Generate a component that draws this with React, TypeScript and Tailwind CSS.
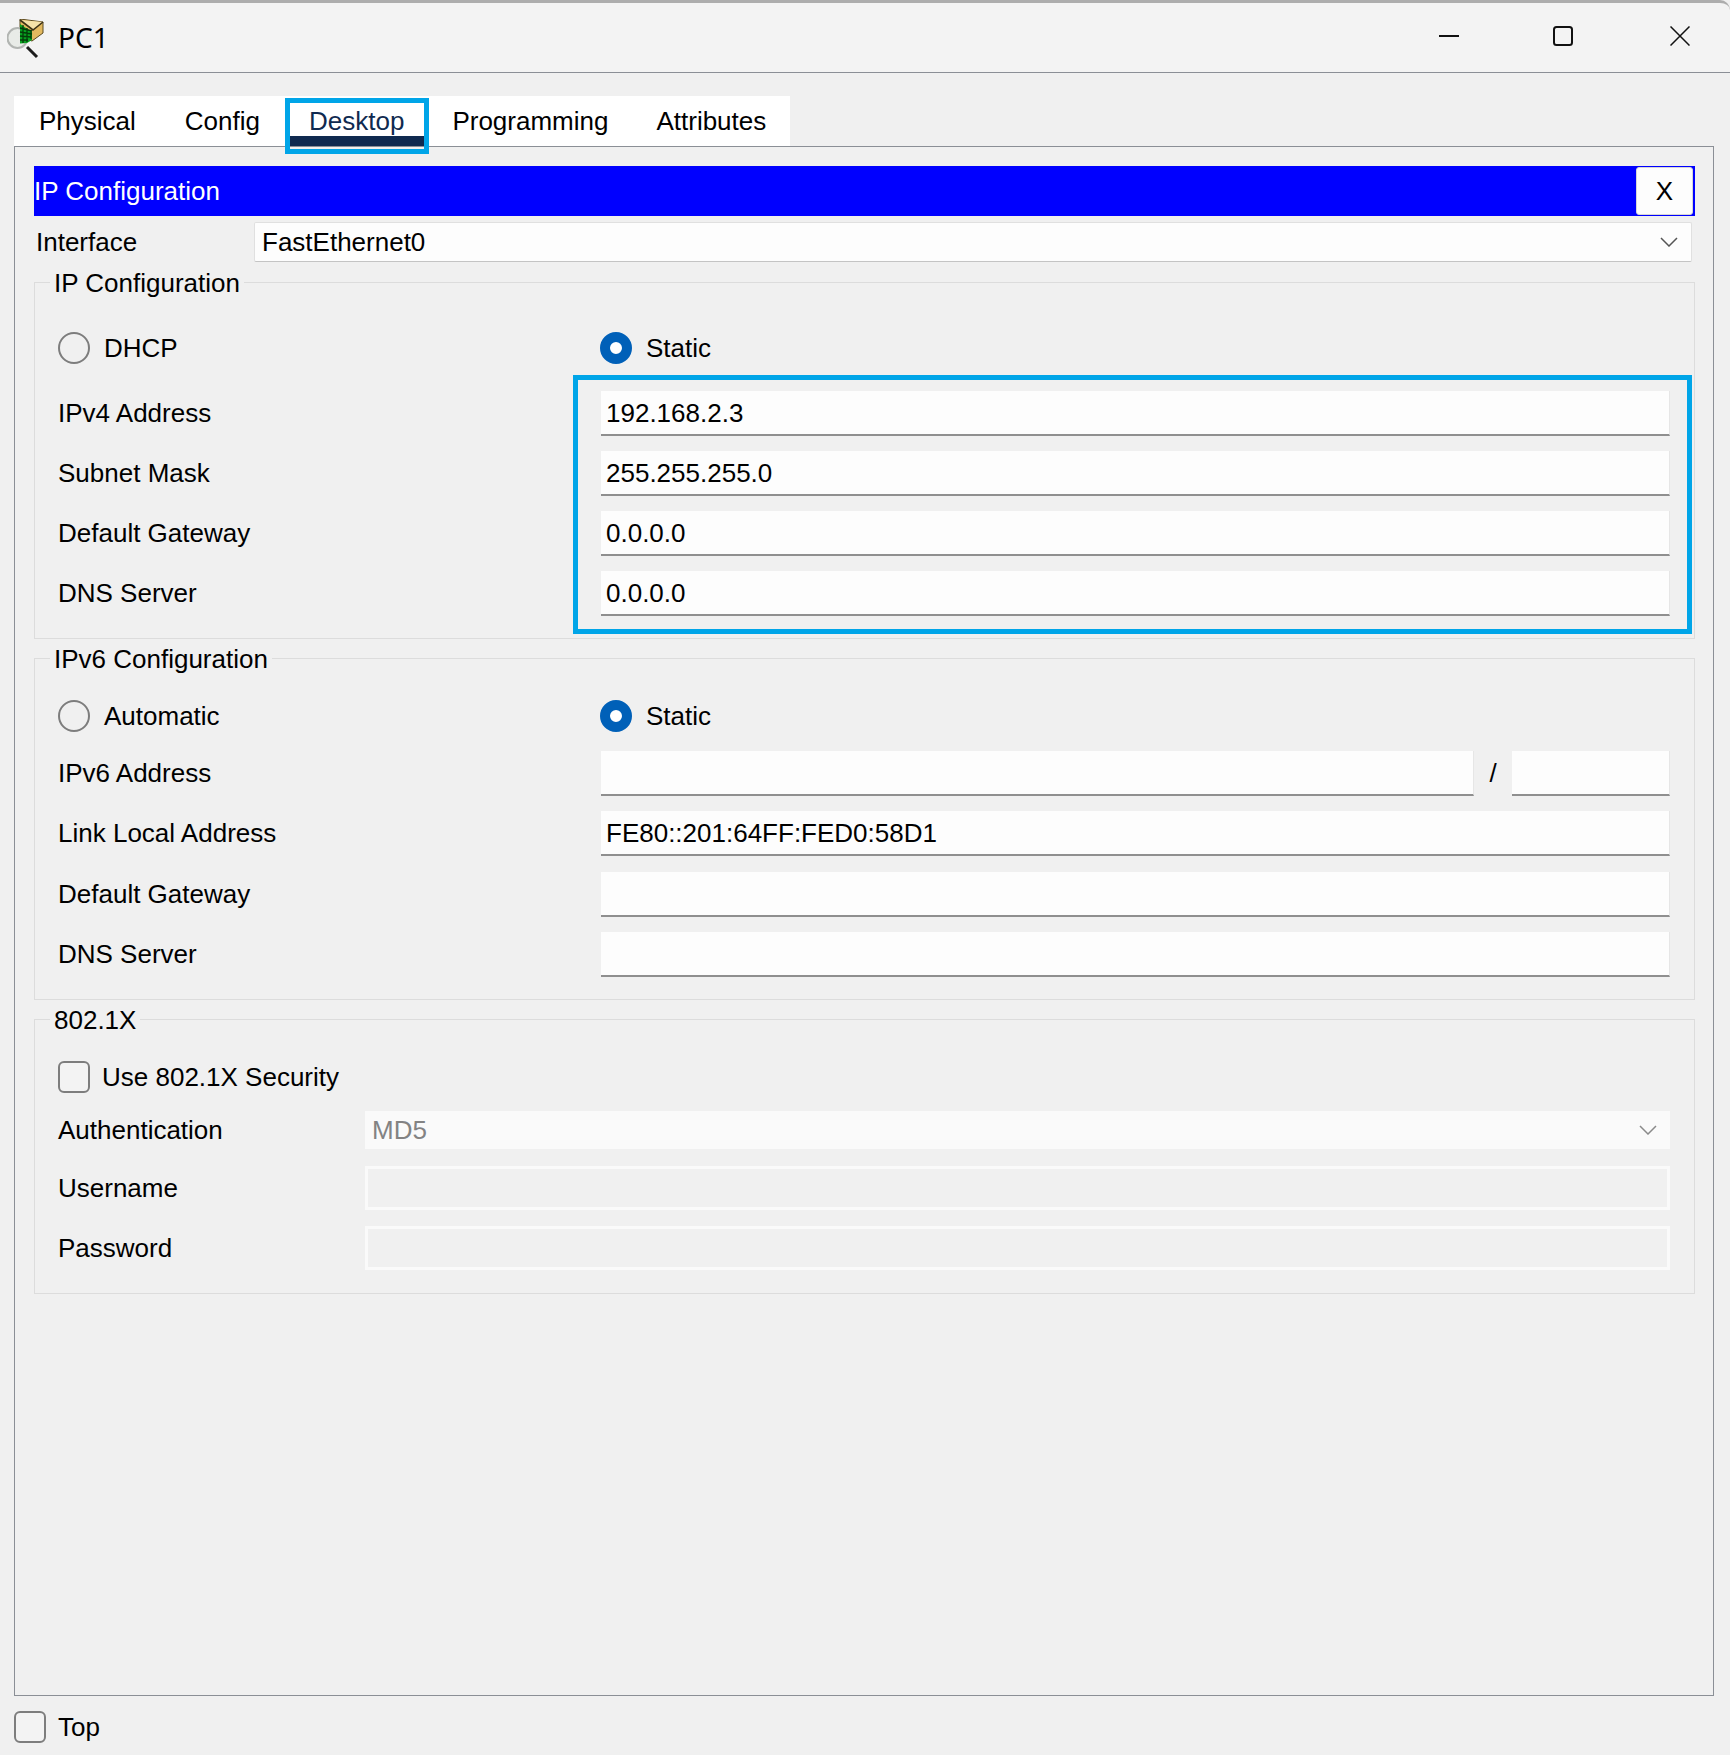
import React from "react";

const Radio = ({ checked }: { checked?: boolean }) =>
  checked ? (
    <span className="block w-[32px] h-[32px] shrink-0 rounded-full border-[10px] border-[#0060b8] bg-white" />
  ) : (
    <span className="block w-[32px] h-[32px] shrink-0 rounded-full border-2 border-[#7d7d7d]" />
  );

const Check = () => (
  <span className="block w-[32px] h-[32px] shrink-0 rounded-[6px] border-2 border-[#7d7d7d] bg-[#f3f3f3]" />
);

const Field = ({ value, className = "" }: { value?: string; className?: string }) => (
  <div className={`h-[45px] flex items-center pl-[5px] pt-[2px] bg-[#fdfdfd] border-b-2 border-r border-r-[#e6e6e6] border-b-[#8f8f8f] ${className}`}>
    {value}
  </div>
);

const Row = ({ label, value, mt = "mt-[15px]" }: { label: string; value?: string; mt?: string }) => (
  <div className={`flex items-center h-[45px] ${mt}`}>
    <div className="w-[543px] shrink-0">{label}</div>
    <Field value={value} className="flex-1" />
  </div>
);

const Section = ({ legend, className, children }: { legend: string; className: string; children: React.ReactNode }) => (
  <div className={`relative border border-[#dcdcdc] pl-[23px] pr-[24px] ${className}`}>
    <div className="absolute left-[15px] top-[-15px] h-[30px] px-[4px] flex items-center bg-[#f0f0f0]">{legend}</div>
    {children}
  </div>
);

const Chevron = ({ color }: { color: string }) => (
  <svg width="18" height="10" viewBox="0 0 18 10" fill="none" stroke={color} strokeWidth="1.5">
    <path d="M1 1l8 8 8-8" />
  </svg>
);

const AppIcon = () => (
  <svg width="40" height="40" viewBox="0 0 40 40" className="shrink-0 ml-[7px] mt-[2px]">
    <path d="M13 0l23 3v11l-11 8-12-4z" fill="#e3b95f" stroke="#5b4a20" strokeWidth="1" />
    <path d="M13 1l13 10 10-8" fill="#f5e2a8" stroke="#3d3215" strokeWidth="1.6" />
    <circle cx="10.5" cy="19" r="10" fill="#e8ebe7" stroke="#b2b5b2" strokeWidth="2" />
    <path d="M13 5l12 8v8l-5 3-7 .5z" fill="#07a21f" />
    <path d="M13 9l12 3M13 13l12 2M13 17l11 1M13 21l8 0M16 6v18M20 9v14M24 12v8" stroke="#043c0a" strokeWidth="1.3" />
    <path d="M20 28l10 10" stroke="#1c1c1c" strokeWidth="3" />
  </svg>
);

export default function App() {
  return (
    <div className="w-[1730px] h-[1755px] flex flex-col bg-[#f0f0f0] text-black text-[26px] font-['Liberation_Sans',Arial,sans-serif] overflow-hidden">
      {/* title bar */}
      <div className="h-[73px] shrink-0 flex items-center bg-[#f3f3f3] border-t-[3px] border-t-[#adadad] border-b border-b-[#8b8f96] rounded-tr-[10px]">
        <AppIcon />
        <span className="ml-[11px] mb-[2px] text-[28px] font-['Noto_Sans',sans-serif] leading-none">PC1</span>
        <div className="ml-auto flex items-center gap-[95px] pr-[40px] mb-[3px]">
          <svg width="20" height="20" viewBox="0 0 20 20"><path d="M0 10h20" stroke="#111" strokeWidth="2" /></svg>
          <svg width="20" height="20" viewBox="0 0 20 20" className="-ml-[1px]"><rect x="1" y="1" width="18" height="18" rx="2.5" fill="none" stroke="#111" strokeWidth="2" /></svg>
          <svg width="20" height="20" viewBox="0 0 20 20" className="ml-[2px]"><path d="M0.5 0.5l19 19M19.5 0.5l-19 19" stroke="#111" strokeWidth="1.5" /></svg>
        </div>
      </div>

      {/* tabs */}
      <div className="mt-[23px] ml-[14px] w-fit h-[50px] shrink-0 flex items-center gap-[49px] pl-[25px] pr-[24px] bg-white">
        <span>Physical</span>
        <span>Config</span>
        <span className="relative h-full flex items-center text-[#0f2a50]">
          Desktop
          <span className="absolute z-10 left-[-24px] top-[2px] w-[144px] h-[56px] border-[5px] border-[#00a5e8]" />
          <span className="absolute left-[-19px] top-[40px] w-[134px] h-[10px] bg-[#0f2a50]" />
        </span>
        <span className="-ml-[1px]">Programming</span>
        <span className="-ml-[1px]">Attributes</span>
      </div>

      {/* panel */}
      <div className="ml-[14px] w-[1700px] flex-1 border border-[#8b8f96] pt-[19px] pl-[19px] pr-[18px]">
        <div className="h-[50px] flex items-center justify-between bg-[#0000ff] text-white pr-[2px]">
          <span>IP Configuration</span>
          <button className="w-[57px] h-[48px] bg-[#fdfdfd] text-black rounded-[3px] border border-[#d6d6d6]">X</button>
        </div>

        <div className="mt-[6px] h-[40px] flex items-center pl-[2px] pr-[3px]">
          <span className="w-[218px] shrink-0">Interface</span>
          <div className="flex-1 h-full flex items-center justify-between pl-[7px] pr-[13px] bg-[#fdfdfd] border border-[#e0e0e0] border-b-[#c4c4c4] rounded-[2px]">
            <span>FastEthernet0</span>
            <Chevron color="#555" />
          </div>
        </div>

        <Section legend="IP Configuration" className="mt-[20px] pt-[49px] pb-[22px]">
          <div className="flex items-center h-[32px]">
            <div className="w-[542px] flex items-center gap-[14px]"><Radio /><span>DHCP</span></div>
            <div className="flex items-center gap-[14px]"><Radio checked /><span>Static</span></div>
          </div>
          <Row label="IPv4 Address" value="192.168.2.3" mt="mt-[27px]" />
          <Row label="Subnet Mask" value="255.255.255.0" />
          <Row label="Default Gateway" value="0.0.0.0" />
          <Row label="DNS Server" value="0.0.0.0" />
          <div className="absolute left-[538px] top-[92px] w-[1119px] h-[259px] border-[5px] border-[#00a5e8]" />
        </Section>

        <Section legend="IPv6 Configuration" className="mt-[19px] pt-[41px] pb-[22px]">
          <div className="flex items-center h-[32px]">
            <div className="w-[542px] flex items-center gap-[14px]"><Radio /><span>Automatic</span></div>
            <div className="flex items-center gap-[14px]"><Radio checked /><span>Static</span></div>
          </div>
          <div className="flex items-center h-[45px] mt-[19px]">
            <div className="w-[543px] shrink-0">IPv6 Address</div>
            <Field className="w-[873px]" />
            <div className="w-[38px] text-center">/</div>
            <Field className="flex-1" />
          </div>
          <Row label="Link Local Address" value="FE80::201:64FF:FED0:58D1" />
          <Row label="Default Gateway" mt="mt-[16px]" />
          <Row label="DNS Server" />
        </Section>

        <Section legend="802.1X" className="mt-[19px] pt-[41px] pb-[23px]">
          <div className="flex items-center h-[32px] gap-[12px]"><Check /><span className="pt-[1px]">Use 802.1X Security</span></div>
          <div className="flex items-center h-[38px] mt-[18px]">
            <div className="w-[307px] shrink-0">Authentication</div>
            <div className="flex-1 h-full flex items-center justify-between pl-[7px] pr-[13px] bg-[#fafafa] text-[#838383]">
              <span>MD5</span>
              <Chevron color="#8a8a8a" />
            </div>
          </div>
          <div className="flex items-center h-[44px] mt-[17px]">
            <div className="w-[307px] shrink-0">Username</div>
            <div className="flex-1 h-full border-[3px] border-[#fafafa]" />
          </div>
          <div className="flex items-center h-[44px] mt-[16px]">
            <div className="w-[307px] shrink-0">Password</div>
            <div className="flex-1 h-full border-[3px] border-[#fafafa]" />
          </div>
        </Section>
      </div>

      {/* footer */}
      <div className="h-[59px] shrink-0 pt-[15px] pl-[14px] flex items-start gap-[12px]">
        <Check />
        <span className="leading-[32px]">Top</span>
      </div>
    </div>
  );
}
